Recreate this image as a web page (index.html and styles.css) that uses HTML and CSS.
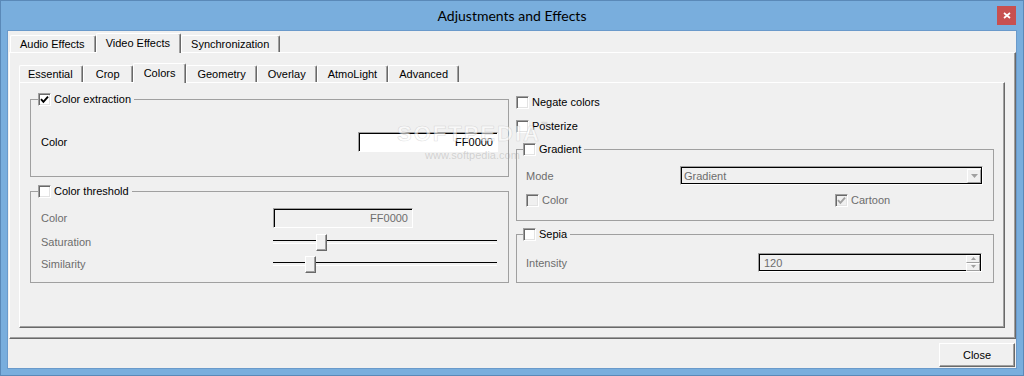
FILE: index.html
```html
<!DOCTYPE html>
<html lang="en">
<head>
    <meta charset="UTF-8">
    <title>Adjustments and Effects</title>
    <link rel="stylesheet" href="styles.css">
</head>
<body>
    <div class="window">
        <div class="titlebar">
            <span class="title">Adjustments and Effects</span>
            <span class="close-x">
                <svg width="8" height="7" viewBox="0 0 8 7"><path d="M1 1 L7 6 M7 1 L1 6" stroke="#fff" stroke-width="1.7" fill="none"/></svg>
            </span>
        </div>
        <div class="client">
            <div class="tabwidget outer">
                <div class="tabbar">
                    <span class="tab">Audio Effects</span>
                    <span class="tab active">Video Effects</span>
                    <span class="tab">Synchronization</span>
                </div>
                <div class="pane outer-pane">
                    <div class="tabbar inner-bar">
                        <span class="tab">Essential</span>
                        <span class="tab">Crop</span>
                        <span class="tab active">Colors</span>
                        <span class="tab">Geometry</span>
                        <span class="tab">Overlay</span>
                        <span class="tab">AtmoLight</span>
                        <span class="tab">Advanced</span>
                    </div>
                    <div class="pane inner-pane">
                        <div class="col col-left">
                            <fieldset class="group extraction">
                                <legend>
                                    <span class="check-row">
                                        <span class="cb">
                                            <svg width="9" height="9" viewBox="0 0 9 9"><polyline points="1,4.2 3.4,6.8 8,1.6" stroke="#000" stroke-width="1.9" fill="none"/></svg>
                                        </span>
                                        Color extraction
                                    </span>
                                </legend>
                                <div class="form-row extraction-row">
                                    <span>Color</span>
                                    <span class="field">FF0000</span>
                                </div>
                            </fieldset>
                            <fieldset class="group threshold">
                                <legend>
                                    <span class="check-row"><span class="cb"></span>Color threshold</span>
                                </legend>
                                <div class="form-row field-row disabled">
                                    <span>Color</span>
                                    <span class="field off">FF0000</span>
                                </div>
                                <div class="form-row slider-row disabled">
                                    <span>Saturation</span>
                                    <span class="slider"><span class="thumb" style="left: 43px"></span></span>
                                </div>
                                <div class="form-row slider-row disabled">
                                    <span>Similarity</span>
                                    <span class="slider"><span class="thumb" style="left: 32px"></span></span>
                                </div>
                            </fieldset>
                        </div>
                        <div class="col col-right">
                            <div class="check-row negate"><span class="cb"></span>Negate colors</div>
                            <div class="check-row posterize"><span class="cb"></span>Posterize</div>
                            <fieldset class="group gradient">
                                <legend>
                                    <span class="check-row"><span class="cb"></span>Gradient</span>
                                </legend>
                                <div class="form-row mode-row disabled">
                                    <span>Mode</span>
                                    <span class="combo">
                                        Gradient
                                        <span class="drop">
                                            <svg width="7" height="4" viewBox="0 0 7 4"><path d="M0 0 H7 L3.5 4 Z" fill="#a0a0a0"/></svg>
                                        </span>
                                    </span>
                                </div>
                                <div class="form-row toggles-row disabled">
                                    <span class="check-row"><span class="cb off"></span>Color</span>
                                    <span class="check-row">
                                        <span class="cb off">
                                            <svg width="9" height="9" viewBox="0 0 9 9"><polyline points="1,4.2 3.4,6.8 8,1.6" stroke="#a0a0a0" stroke-width="1.9" fill="none"/></svg>
                                        </span>
                                        Cartoon
                                    </span>
                                </div>
                            </fieldset>
                            <fieldset class="group sepia">
                                <legend>
                                    <span class="check-row"><span class="cb"></span>Sepia</span>
                                </legend>
                                <div class="form-row intensity-row disabled">
                                    <span>Intensity</span>
                                    <span class="combo spin">
                                        120
                                        <span class="spin-btns">
                                            <span class="spin-btn"><svg width="5" height="3" viewBox="0 0 5 3"><path d="M0 3 H5 L2.5 0 Z" fill="#a0a0a0"/></svg></span>
                                            <span class="spin-btn"><svg width="5" height="3" viewBox="0 0 5 3"><path d="M0 0 H5 L2.5 3 Z" fill="#a0a0a0"/></svg></span>
                                        </span>
                                    </span>
                                </div>
                            </fieldset>
                        </div>
                        <div class="watermark">
                            <div class="wm-big">SOFTPEDIA<sup>™</sup></div>
                            <div class="wm-small">www.softpedia.com</div>
                        </div>
                    </div>
                </div>
            </div>
            <div class="buttons">
                <button class="btn" type="button">Close</button>
            </div>
        </div>
    </div>
</body>
</html>
```

FILE: styles.css
```css
* {
    margin: 0;
    padding: 0;
    box-sizing: border-box;
}

body {
    font-family: "Liberation Sans", Arial, sans-serif;
    font-size: 11px;
    color: #000;
    background-color: #79aedd;
}

.window {
    width: 1024px;
    height: 376px;
    border: 1px solid #5a89b8;
    background-color: #79aedd;
    display: flex;
    flex-direction: column;
}

.titlebar {
    height: 29px;
    display: grid;
    grid-template-columns: 1fr auto 1fr;
    align-items: center;
}

.title {
    grid-column: 2;
    font-family: Lato, "Open Sans", sans-serif;
    font-size: 14px;
    color: #000;
}

.close-x {
    grid-column: 3;
    justify-self: end;
    align-self: start;
    margin: 5px 7px 0 0;
    width: 19px;
    height: 19px;
    background-color: #c75050;
    display: flex;
    align-items: center;
    justify-content: center;
}

.client {
    flex: 1;
    margin: 0 6px 6px;
    border: 1px solid #6a9acb;
    background-color: #f0f0f0;
    display: flex;
    flex-direction: column;
}

/* tabs */

.tabwidget.outer {
    flex: 1;
    display: flex;
    flex-direction: column;
    margin: 2px 0 0 1px;
}

.tabbar {
    display: flex;
    align-items: flex-end;
    height: 19px;
    padding-left: 1px;
}

.tab {
    height: 17px;
    padding: 0 10px 0 9px;
    line-height: 17px;
    border: 1px solid #fff;
    border-bottom: none;
    border-right-color: #696969;
    box-shadow: inset -1px 0 0 #a0a0a0;
    border-radius: 2px 2px 0 0;
    white-space: nowrap;
    text-align: center;
}

.tab.active {
    height: 20px;
    margin-bottom: -1px;
    line-height: 18px;
    background-color: #f0f0f0;
    position: relative;
    z-index: 1;
}

.inner-bar {
    padding-left: 0;
}

.inner-bar .tab {
    padding: 0 10px;
    min-width: 50px;
}

.inner-bar .tab:first-child {
    padding: 0 9px 0 8px;
}

.pane {
    border: 1px solid;
    border-color: #fff #696969 #696969 #fff;
    box-shadow: inset -1px -1px 0 #a0a0a0;
}

.outer-pane {
    flex: 1;
    padding: 10px 10px 10px 9px;
    display: flex;
    flex-direction: column;
}

.inner-pane {
    flex: 1;
    padding: 10px 10px 0 10px;
    display: flex;
    gap: 7px;
    position: relative;
}

.col-left {
    width: 479px;
}

.col-right {
    width: 478px;
    padding-top: 3px;
}

/* group boxes */

.group {
    border: 1px solid #a0a0a0;
    min-width: 0;
}

.group legend {
    margin-left: -3px;
    padding-right: 3px;
    height: 13px;
    line-height: 13px;
}

.check-row {
    display: flex;
    align-items: center;
    gap: 3px;
    height: 13px;
    line-height: 13px;
    white-space: nowrap;
}

.cb {
    width: 13px;
    height: 13px;
    border: 1px solid;
    border-color: #a0a0a0 #fff #fff #a0a0a0;
    box-shadow: inset 1px 1px 0 #696969, inset -1px -1px 0 #e3e3e3;
    background-color: #fff;
    display: flex;
    align-items: center;
    justify-content: center;
    flex-shrink: 0;
}

.cb.off {
    background-color: #f0f0f0;
}

.extraction {
    padding: 26px 10px 24px 10px;
}

.threshold {
    margin-top: 8px;
    padding: 10px 10px 7px 10px;
}

.form-row {
    display: grid;
    align-items: center;
}

.disabled {
    color: #6d6d6d;
}

.extraction-row {
    grid-template-columns: 1fr 140px;
}

.field-row {
    grid-template-columns: 232px 140px;
}

.slider-row {
    grid-template-columns: 232px 224px;
    height: 22px;
}

.field-row + .slider-row {
    margin-top: 3px;
}

.field {
    height: 20px;
    border: 1px solid;
    border-color: #a0a0a0 #fff #fff #a0a0a0;
    box-shadow: inset 1px 1px 0 #000;
    background-color: #fff;
    text-align: right;
    padding-right: 4px;
    line-height: 18px;
}

.field.off {
    background-color: #f0f0f0;
}

.slider {
    position: relative;
    height: 22px;
    display: flex;
    align-items: center;
}

.slider::before {
    content: "";
    flex: 1;
    height: 2px;
    border-top: 1px solid #000;
    border-bottom: 1px solid #fff;
}

.thumb {
    position: absolute;
    top: 3px;
    width: 11px;
    height: 17px;
    border: 1px solid;
    border-color: #fff #696969 #696969 #fff;
    box-shadow: inset -1px -1px 0 #a0a0a0;
    background-color: #f0f0f0;
}

/* right column */

.posterize {
    margin-top: 11px;
}

.gradient {
    margin-top: 10px;
    padding: 10px 10px 13px 9px;
}

.sepia {
    margin-top: 7px;
    padding: 12px 10px 10px 9px;
}

.mode-row {
    grid-template-columns: 154px 303px;
}

.toggles-row {
    grid-template-columns: 309px auto;
    margin-top: 9px;
}

.intensity-row {
    grid-template-columns: 232px 224px;
}

.combo {
    height: 19px;
    border: 1px solid;
    border-color: #a0a0a0 #fff #fff #a0a0a0;
    box-shadow: inset 0 0 0 1px #000;
    display: flex;
    align-items: center;
    justify-content: space-between;
    padding-left: 3px;
}

.drop {
    width: 14px;
    height: 14px;
    margin-right: 1px;
    border: 1px solid;
    border-color: #fff #a0a0a0 #a0a0a0 #fff;
    background-color: #f0f0f0;
    display: flex;
    align-items: center;
    justify-content: center;
}

.spin {
    padding-left: 5px;
}

.spin-btns {
    display: flex;
    flex-direction: column;
    margin-right: 1px;
}

.spin-btn {
    width: 14px;
    height: 8px;
    border: 1px solid;
    border-color: #fff #a0a0a0 #a0a0a0 #fff;
    display: flex;
    align-items: center;
    justify-content: center;
}

/* watermark laid over the page */

.watermark {
    position: absolute;
    left: 377px;
    top: 38px;
    pointer-events: none;
    text-align: center;
}

.wm-big {
    font-size: 22px;
    font-weight: bold;
    letter-spacing: 2px;
    color: rgba(255, 255, 255, 0.6);
    -webkit-text-stroke: 0.6px rgba(160, 160, 160, 0.35);
}

.wm-big sup {
    font-size: 7px;
    letter-spacing: 0;
    vertical-align: 14px;
}

.wm-small {
    font-size: 11px;
    color: rgba(150, 150, 150, 0.35);
    margin-top: 2px;
}

/* bottom buttons */

.buttons {
    height: 29px;
    display: flex;
    justify-content: flex-end;
    align-items: flex-start;
    padding: 4px 1px 0 0;
}

.btn {
    width: 76px;
    height: 24px;
    font-family: "Liberation Sans", Arial, sans-serif;
    font-size: 11px;
    color: #000;
    background-color: #f0f0f0;
    border: 1px solid;
    border-color: #fff #696969 #696969 #fff;
    box-shadow: inset -1px -1px 0 #a0a0a0;
}
```
